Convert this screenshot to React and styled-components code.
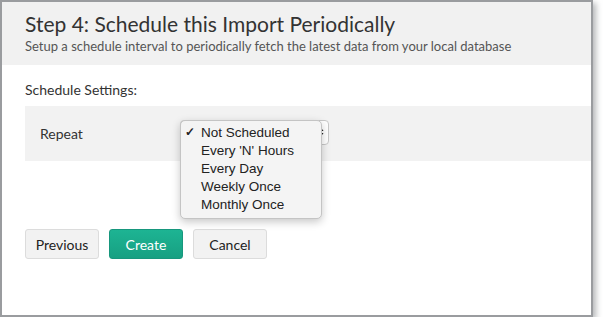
import React from "react";
import styled, { createGlobalStyle } from "styled-components";

const Global = createGlobalStyle`
  html, body { margin: 0; padding: 0; background: #ffffff; }
  body { font-family: "Lato", "Open Sans", sans-serif; }
`;

const Frame = styled.div`
  width: 589px;
  height: 313px;
  border: 2px solid #9a9c9f;
  background: #fff;
  box-shadow: 3px 3px 6px rgba(120, 124, 128, 0.55);
  display: flex;
  flex-direction: column;
  overflow: visible;
`;

const Header = styled.div`
  background: #f1f1f1;
  padding: 8px 23px 0 23px;
  height: 55px;
`;

const Title = styled.h1`
  margin: 0;
  font-size: 21px;
  font-weight: 400;
  color: #333;
  line-height: 27px;
`;

const Subtitle = styled.p`
  margin: 1px 0 0;
  font-size: 13px;
  color: #555;
  line-height: 16px;
`;

const Body = styled.div`
  padding: 16px 0 0 23px;
  display: flex;
  flex-direction: column;
`;

const SectionLabel = styled.div`
  font-size: 14px;
  color: #333;
  line-height: 17px;
  margin-bottom: 8px;
`;

const Row = styled.div`
  position: relative;
  background: #f2f2f2;
  height: 55px;
  display: flex;
  align-items: center;
  padding-left: 15px;
`;

const RowLabel = styled.div`
  width: 140px;
  font-size: 14px;
  color: #333;
`;

const SelectBox = styled.div`
  width: 149px;
  height: 25px;
  margin-top: -3px;
  border: 1px solid #c8c8c8;
  border-radius: 4px;
  background: #fff;
  display: flex;
  align-items: center;
  justify-content: flex-end;
  padding-right: 4px;
  box-sizing: border-box;
`;

const Menu = styled.ul`
  position: absolute;
  left: 155px;
  top: 14px;
  width: 140px;
  margin: 0;
  padding: 2px 0 5px;
  list-style: none;
  background: #f4f4f4;
  border: 1px solid #c4c4c4;
  border-radius: 5px;
  box-shadow: 0 3px 8px rgba(0, 0, 0, 0.22);
  font-family: "Liberation Sans", Arial, sans-serif;
  font-size: 13.5px;
  color: #222;
  z-index: 2;
`;

const Item = styled.li`
  display: flex;
  align-items: center;
  height: 18px;
  padding-left: 4px;
`;

const Check = styled.span`
  width: 16px;
  font-size: 12px;
  font-weight: 700;
`;

const Buttons = styled.div`
  display: flex;
  gap: 10px;
  margin-top: 68px;
`;

const Button = styled.button`
  width: 74px;
  height: 30px;
  border-radius: 3px;
  font-family: "Lato", "Open Sans", sans-serif;
  font-size: 14px;
  cursor: pointer;
  border: 1px solid ${(p) => (p.$primary ? "#17977d" : "#dcdcdc")};
  background: ${(p) =>
    p.$primary ? "linear-gradient(#1db493, #17a082)" : "#f2f2f2"};
  color: ${(p) => (p.$primary ? "#fff" : "#222")};
  padding: 0;
`;

const Arrows = () => (
  <svg width="7" height="12" viewBox="0 0 7 12">
    <path d="M3.5 1 L6.5 5 L0.5 5 Z" fill="#222" />
    <path d="M3.5 11 L6.5 7 L0.5 7 Z" fill="#222" />
  </svg>
);

const options = ["Not Scheduled", "Every 'N' Hours", "Every Day", "Weekly Once", "Monthly Once"];

export default function App() {
  return (
    <>
      <Global />
      <Frame>
        <Header>
          <Title>Step 4: Schedule this Import Periodically</Title>
          <Subtitle>
            Setup a schedule interval to periodically fetch the latest data from your local database
          </Subtitle>
        </Header>
        <Body>
          <SectionLabel>Schedule Settings:</SectionLabel>
          <Row>
            <RowLabel>Repeat</RowLabel>
            <SelectBox>
              <Arrows />
            </SelectBox>
            <Menu>
              {options.map((o, i) => (
                <Item key={o}>
                  <Check>{i === 0 ? "✓" : ""}</Check>
                  {o}
                </Item>
              ))}
            </Menu>
          </Row>
          <Buttons>
            <Button>Previous</Button>
            <Button $primary>Create</Button>
            <Button>Cancel</Button>
          </Buttons>
        </Body>
      </Frame>
    </>
  );
}
